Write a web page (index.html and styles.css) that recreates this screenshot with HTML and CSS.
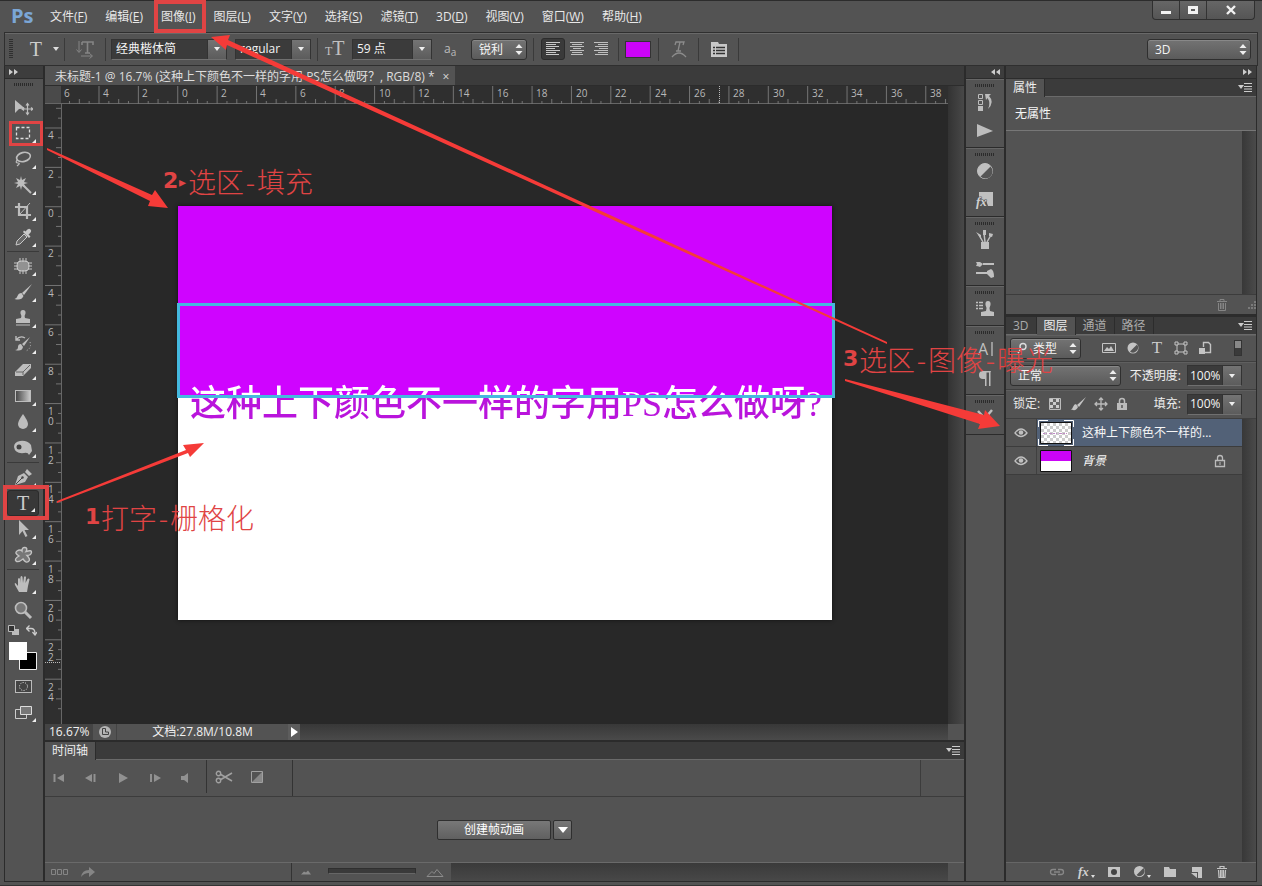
FILE: index.html
```html
<!DOCTYPE html>
<html lang="zh-CN">
<head>
<meta charset="utf-8">
<meta name="viewport" content="width=device-width, initial-scale=1">
<title>未标题-1</title>
<link rel="stylesheet" href="styles.css">
</head>
<body>
<div class="app">
  <header class="menubar">
    <span class="logo">Ps</span>
    <nav class="menus">
      <a href="#file">文件(<u>F</u>)</a><a href="#edit">编辑(<u>E</u>)</a><a href="#image">图像(<u>I</u>)</a><a href="#layer">图层(<u>L</u>)</a><a href="#type">文字(<u>Y</u>)</a><a href="#select">选择(<u>S</u>)</a><a href="#filter">滤镜(<u>T</u>)</a><a href="#3d">3D(<u>D</u>)</a><a href="#view">视图(<u>V</u>)</a><a href="#window">窗口(<u>W</u>)</a><a href="#help">帮助(<u>H</u>)</a>
    </nav>
    <div class="winbtns">
      <button aria-label="最小化"><svg width="12" height="12"><path d="M1 7h10v3H1z" fill="#f2f2f2"/></svg></button>
      <button aria-label="最大化"><svg width="12" height="12"><path d="M2.500 3.500h7v5h-7z" fill="none" stroke="#f2f2f2" stroke-width="3"/></svg></button>
      <button class="close" aria-label="关闭"><svg width="12" height="12"><path d="M2 2l8 8M10 2l-8 8" stroke="#f2f2f2" stroke-width="2.400"/></svg></button>
    </div>
  </header>

  <div class="options">
    <i class="grip-v"></i>
    <button class="opt-type" aria-label="文字工具"><span class="serif-t">T</span><svg width="6" height="4"><path d="M0 0h6L3 4z" fill="#ddd"/></svg></button>
    <i class="vsep"></i>
    <button class="opt-orient" aria-label="切换文本取向"><svg width="20" height="20"><path d="M4 2v11M1.500 10.500L4 13.500l2.500-3M6 17h11M14.500 14.500l3 2.500-3 2.500" fill="none" stroke="#858585"/><path d="M7 3h11v3M7 6V3M12.500 3v11M10 14h5" fill="none" stroke="#858585" stroke-width="1.600"/></svg></button>
    <i class="vsep"></i>
    <div class="combo font"><input aria-label="字体" value="经典楷体简"><button aria-label="字体列表"><svg width="6" height="4"><path d="M0 0h6L3 4z" fill="#eee"/></svg></button></div>
    <div class="combo style"><input aria-label="字体样式" value="regular"><button aria-label="样式列表"><svg width="6" height="4"><path d="M0 0h6L3 4z" fill="#eee"/></svg></button></div>
    <i class="vsep"></i>
    <span class="size-t"><small>T</small>T</span>
    <div class="combo size"><input aria-label="字号" value="59 点"><button aria-label="字号列表"><svg width="6" height="4"><path d="M0 0h6L3 4z" fill="#eee"/></svg></button></div>
    <span class="aa">a<sub>a</sub></span>
    <div class="select sharp"><select aria-label="消除锯齿"><option>锐利</option></select><svg width="8" height="11"><path d="M4 0l3.500 4h-7zM4 11L.5 7h7z" fill="#eee"/></svg></div>
    <i class="vsep"></i>
    <div class="aligns">
      <button class="on" aria-label="左对齐"><svg width="16" height="16"><path d="M1 1.500h14M1 3.500h10M1 5.500h13M1 7.500h9M1 9.500h14M1 11.500h10M1 13.500h13" stroke="#c8c8c8"/></svg></button>
      <button aria-label="居中"><svg width="16" height="16"><path d="M1 1.500h14M3 3.500h10M1 5.500h14M4 7.500h8M1 9.500h14M3 11.500h10M2 13.500h12" stroke="#c0c0c0"/></svg></button>
      <button aria-label="右对齐"><svg width="16" height="16"><path d="M1 1.500h14M5 3.500h10M2 5.500h13M6 7.500h9M1 9.500h14M5 11.500h10M2 13.500h13" stroke="#c0c0c0"/></svg></button>
    </div>
    <i class="vsep"></i>
    <button class="swatch" aria-label="文本颜色"></button>
    <i class="vsep"></i>
    <button class="warp" aria-label="变形文字"><svg width="16" height="18"><path d="M4 5l1-3h8l-1 3M9 2L7 11M5 11h5M1 17q7-8 14 0" fill="none" stroke="#8c8c8c" stroke-width="1.300"/></svg></button>
    <i class="vsep"></i>
    <button class="panels" aria-label="字符面板"><svg width="18" height="17"><path d="M1 1h7l1 2h8v13H1z" fill="#c8c8c8"/><path d="M3 6.500h2M6 6.500h9M3 9.500h2M6 9.500h9M3 12.500h2M6 12.500h9" stroke="#333" stroke-width="1.300"/></svg></button>
    <i class="vsep"></i>
    <div class="select workspace-select"><select aria-label="工作区"><option>3D</option></select><svg width="8" height="11"><path d="M4 0l3.500 4h-7zM4 11L.5 7h7z" fill="#eee"/></svg></div>
  </div>

  <div class="workspace">
    <aside class="toolbar">
      <div class="strip"><svg width="9" height="6"><path d="M0 0l4 3-4 3zM5 0l4 3-4 3z" fill="#ccc"/></svg></div>
      <i class="grip"></i>
      <div class="tools">
        <button aria-label="移动"><svg width="20" height="20"><path d="M2 3v13l4-4 6-.5z" fill="#bdbdbd"/><path d="M14.500 7v10M9.500 12h10M13 8.500l1.500-2 1.500 2M13 15.500l1.500 2 1.500-2M11 10.500L9 12l2 1.500M18 10.500l2 1.500-2 1.500" fill="none" stroke="#bdbdbd" stroke-width="1.200"/></svg></button>
        <button class="more" aria-label="矩形选框"><svg width="20" height="20"><path d="M3.500 4.500h13v11h-13z" fill="none" stroke="#ddd" stroke-width="1.300" stroke-dasharray="3 2"/></svg></button>
        <button class="more" aria-label="套索"><svg width="20" height="20"><ellipse cx="10.500" cy="8" rx="7" ry="4.500" transform="rotate(-14 10.500 8)" fill="none" stroke="#bdbdbd" stroke-width="1.600"/><path d="M4 11q-2 3 1 3t-1 3" fill="none" stroke="#bdbdbd" stroke-width="1.200"/></svg></button>
        <button class="more" aria-label="魔棒"><svg width="20" height="20"><path d="M8 1l1 4 4-2-2 4 4 1-4 1 2 4-4-2-1 4-1-4-4 2 2-4-4-1 4-1-2-4 4 2z" fill="#bdbdbd"/><path d="M10 10l8 8" stroke="#bdbdbd" stroke-width="2"/></svg></button>
        <button class="more" aria-label="裁剪"><svg width="20" height="20"><path d="M6 2v12h12M2 6h12v12" fill="none" stroke="#bdbdbd" stroke-width="2.200"/><path d="M7 13L17 2" stroke="#bdbdbd"/></svg></button>
        <button class="more" aria-label="吸管"><svg width="20" height="20"><path d="M3 18l1-4 7-7 3 3-7 7z" fill="#686868" stroke="#c8c8c8"/><path d="M10 5l6 6 1.500-1.500-2-2q4-3 2-5t-5 2l-1.500-1z" fill="#c8c8c8"/></svg></button>
        <i class="hsep"></i>
        <button class="more" aria-label="污点修复"><svg width="20" height="20"><rect x="4" y="5" width="12" height="10" rx="4" fill="#929292" stroke="#c8c8c8"/><path d="M7 2v4M10 2v4M13 2v4M7 14v4M10 14v4M13 14v4M1 7h4M1 10h4M1 13h4M15 7h4M15 10h4M15 13h4" stroke="#c8c8c8"/></svg></button>
        <button class="more" aria-label="画笔"><svg width="20" height="20"><path d="M19 2L9 11l2 2z" fill="#c4c4c4"/><path d="M8.500 11q-3 0-4 3t-3 3q7 2 9-3z" fill="#c4c4c4"/></svg></button>
        <button class="more" aria-label="图章"><svg width="20" height="20"><path d="M8 10q1-2-.5-4.500Q7 2 10 2t2.500 3.500Q11 8 12 10l5 1v4H3v-4zM3 16.500h14v1H3z" fill="#bdbdbd"/></svg></button>
        <button class="more" aria-label="历史画笔"><svg width="20" height="20"><path d="M17 3L9 10l2 2zM8 10q-3 0-3 3t-3 3q7 2 8-3z" fill="#bdbdbd"/><path d="M3 6q4-5 9-2M3 2v4h4" fill="none" stroke="#bdbdbd" stroke-width="1.400"/><path d="M17 8q2 6-4 9" fill="none" stroke="#bdbdbd" stroke-dasharray="1 2"/></svg></button>
        <button class="more" aria-label="橡皮擦"><svg width="20" height="20"><path d="M2 12L10 4h8v4l-8 8H2z" fill="#bdbdbd"/><path d="M3 12h7l7-7M10 12v3" fill="none" stroke="#666"/></svg></button>
        <button class="more" aria-label="渐变"><svg width="20" height="20"><defs><linearGradient id="gr"><stop stop-color="#444"/><stop offset="1" stop-color="#ccc"/></linearGradient></defs><rect x="2.500" y="4.500" width="15" height="11" fill="url(#gr)" stroke="#bdbdbd"/></svg></button>
        <button class="more" aria-label="模糊"><svg width="20" height="20"><path d="M10 2q5 7 5 10a5 5 0 01-10 0q0-3 5-10z" fill="#bdbdbd"/></svg></button>
        <button class="more" aria-label="海绵"><svg width="20" height="20"><path d="M1 9q0-5 6-6 7-1 11 4l1 6-3 4q-1-3-5-2-9 1-10-6z" fill="#bdbdbd"/><circle cx="6" cy="9" r="2.500" fill="#444"/></svg></button>
        <i class="hsep"></i>
        <button class="more" aria-label="钢笔"><svg width="20" height="20"><path d="M2 18l3-9 6-3 4 4-3 5zM12 5l2-3 5 5-3 2z" fill="#bdbdbd"/><path d="M3 17l6-6" stroke="#444"/><circle cx="9.500" cy="10.500" r="1.200" fill="#444"/></svg></button>
        <button class="more on" aria-label="横排文字"><span class="serif-t">T</span></button>
        <button class="more" aria-label="路径选择"><svg width="20" height="20"><path d="M6 1v15l3.500-4 3 6 2-1-3-6h4.500z" fill="#bdbdbd"/></svg></button>
        <button class="more" aria-label="自定形状"><svg width="20" height="20"><path d="M9 6q0-4 3-3.500t1 4q6-2 5.500 1t-4.500 3q4 4 1.500 6T10 14q-5 4-7 2t3-5q-5-3-2-5t5 0z" fill="#777" stroke="#c4c4c4" stroke-width="1.400"/></svg></button>
        <i class="hsep"></i>
        <button class="more" aria-label="抓手"><svg width="20" height="20"><path d="M6 18L2 11q-1-2 .5-2L5 12V5q1-2 2 0v4l.5-6q1-2 2 0l.5 6 1-6q1-1.500 2 0l-.5 6 2-4q1.500-1 2 .5L15 12l-1 6z" fill="#bdbdbd"/></svg></button>
        <button aria-label="缩放"><svg width="20" height="20"><path d="M11 11l7 7" stroke="#bdbdbd" stroke-width="3"/><circle cx="8" cy="8" r="5.500" fill="#777" stroke="#bdbdbd" stroke-width="1.600"/></svg></button>
      </div>
      <div class="mini">
        <svg width="11" height="10"><path d="M4 4h7v6H4z" fill="#bbb"/><path d="M.5.5h6v6h-6z" fill="#333" stroke="#bbb"/></svg>
        <svg width="11" height="11"><path d="M1 3.500h4q4 0 4 5M3.500.5l-3 3 3 3M6.500 7l2.500 3 2-3" fill="none" stroke="#ccc" stroke-width="1.300"/></svg>
      </div>
      <svg class="colors" width="30" height="30"><path d="M11.500 11.500h17v17h-17z" fill="#000" stroke="#eee"/><path d="M1 1h18v18H1z" fill="#fff"/></svg>
      <div class="tools">
        <button aria-label="快速蒙版"><svg width="20" height="20"><rect x="2.500" y="4.500" width="16" height="12" fill="#444" stroke="#bbb"/><circle cx="10.500" cy="10.500" r="4" fill="none" stroke="#eee" stroke-dasharray="1 1.500"/></svg></button>
        <button class="more" aria-label="屏幕模式"><svg width="20" height="20"><path d="M2.500 7.500h11v9h-11z" fill="none" stroke="#ccc"/><path d="M7.500 4.500h11v8h-11z" fill="#777" stroke="#ddd"/></svg></button>
      </div>
    </aside>

    <main class="center">
      <div class="doctabs"><div class="doctab"><span>未标题-1 @ 16.7% (这种上下颜色不一样的字用 PS怎么做呀？, RGB/8) *</span><button aria-label="关闭文档">×</button></div></div>
      <div class="docrow">
        <div class="docmain">
          <div class="ruler-top">
            <i class="corner"></i>
            <svg class="ruler-h" width="100%" height="18">
              <defs><pattern id="ph" x="37.500" width="39.370" height="18" patternUnits="userSpaceOnUse"><path d="M.5 0v18M10.340 15v3M20.200 13v5M30 15v3" stroke="#747474"/></pattern></defs>
              <rect width="100%" height="18" fill="url(#ph)"/>
              <path d="M658.500 0v18" stroke="#bbb" stroke-dasharray="1 1"/>
              <text x="3" y="11">6</text><text x="42" y="11">4</text><text x="81" y="11">2</text><text x="121" y="11">0</text><text x="160" y="11">2</text><text x="199" y="11">4</text><text x="239" y="11">6</text><text x="278" y="11">8</text><text x="318" y="11">10</text><text x="357" y="11">12</text><text x="397" y="11">14</text><text x="436" y="11">16</text><text x="475" y="11">18</text><text x="515" y="11">20</text><text x="554" y="11">22</text><text x="594" y="11">24</text><text x="633" y="11">26</text><text x="672" y="11">28</text><text x="712" y="11">30</text><text x="751" y="11">32</text><text x="790" y="11">34</text><text x="830" y="11">36</text><text x="869" y="11">38</text>
            </svg>
          </div>
          <div class="docbody">
            <div class="ruler-left">
              <svg class="ruler-v" width="16" height="610">
                <defs><pattern id="pv" y="23.500" width="16" height="39.370" patternUnits="userSpaceOnUse"><path d="M0 .5h16M13 10.340h3M11 20.200h5M13 30h3" stroke="#747474"/></pattern></defs>
                <rect width="16" height="610" fill="url(#pv)"/>
                <path d="M0 558.500h16" stroke="#bbb" stroke-dasharray="1 1"/>
                <text x="3" y="35">4</text><text x="3" y="74">2</text><text x="3" y="113">0</text><text x="3" y="153">2</text><text x="3" y="193">4</text><text x="3" y="232">6</text><text x="3" y="271">8</text>
                <text><tspan x="3" y="311">1</tspan><tspan x="3" y="321">0</tspan></text><text><tspan x="3" y="350">1</tspan><tspan x="3" y="360">2</tspan></text><text><tspan x="3" y="389">1</tspan><tspan x="3" y="399">4</tspan></text><text><tspan x="3" y="429">1</tspan><tspan x="3" y="439">6</tspan></text><text><tspan x="3" y="469">1</tspan><tspan x="3" y="479">8</tspan></text><text><tspan x="3" y="508">2</tspan><tspan x="3" y="518">0</tspan></text><text><tspan x="3" y="547">2</tspan><tspan x="3" y="557">2</tspan></text><text><tspan x="3" y="587">2</tspan><tspan x="3" y="597">4</tspan></text>
              </svg>
            </div>
            <div class="stage">
              <div class="artboard">
                <p class="art-text">这种上下颜色不一样的字用PS怎么做呀?</p>
                <div class="selection"></div>
              </div>
            </div>
          </div>
        </div>
        <div class="vscroll"></div>
      </div>
      <div class="status">
        <span class="zoom">16.67%</span>
        <span class="st-icon"><svg width="14" height="14"><circle cx="7" cy="7" r="6" fill="#b5b5b5"/><path d="M4.500 3.500v6h6V7h-3V3.500z" fill="none" stroke="#444"/></svg></span>
        <span class="docinfo">文档:27.8M/10.8M</span>
        <button aria-label="状态栏选项"><svg width="7" height="10"><path d="M0 0l7 5-7 5z" fill="#fff"/></svg></button>
        <i class="hscroll"></i><i class="sizer"></i>
      </div>
      <section class="timeline">
        <div class="tabs"><button class="tab on">时间轴</button><button class="panel-menu" aria-label="时间轴菜单"><svg width="14" height="9"><path d="M0 2h6L3 6z" fill="#ccc"/><path d="M6 .5h8M6 3.500h8M6 6h8M6 8.500h8" stroke="#ccc"/></svg></button></div>
        <div class="tl-controls">
          <div class="play">
            <button aria-label="首帧"><svg width="14" height="12"><path d="M2.500 2v8" stroke="#919191" stroke-width="2"/><path d="M12 2v8L5 6z" fill="#919191"/></svg></button>
            <button aria-label="上一帧"><svg width="14" height="12"><path d="M8 2v8L1 6z" fill="#919191"/><path d="M10.500 2v8" stroke="#919191" stroke-width="2"/></svg></button>
            <button aria-label="播放"><svg width="14" height="12"><path d="M3 1l9 5-9 5z" fill="#919191"/></svg></button>
            <button aria-label="下一帧"><svg width="14" height="12"><path d="M3 2v8" stroke="#919191" stroke-width="2"/><path d="M6 2v8l7-4z" fill="#919191"/></svg></button>
            <button aria-label="声音"><svg width="14" height="12"><path d="M1 4h3l4-3v10L4 8H1z" fill="#919191"/></svg></button>
          </div>
          <div class="cut">
            <button aria-label="拆分"><svg width="18" height="14"><path d="M5 4l12 7M5 10l12-7" stroke="#a0a0a0" stroke-width="1.600"/><circle cx="3.500" cy="3.500" r="2.200" fill="none" stroke="#a0a0a0" stroke-width="1.400"/><circle cx="3.500" cy="10.500" r="2.200" fill="none" stroke="#a0a0a0" stroke-width="1.400"/></svg></button>
            <button aria-label="过渡"><svg width="14" height="14"><path d="M1.500 1.500h11v11h-11z" fill="none" stroke="#a0a0a0"/><path d="M12 2v10H2z" fill="#888"/></svg></button>
          </div>
          <i class="tl-end"></i>
        </div>
        <div class="tl-body"><button class="btn">创建帧动画</button><button class="btn drop" aria-label="更多"><svg width="10" height="6"><path d="M0 0h10L5 6z" fill="#fff"/></svg></button></div>
        <div class="tl-foot">
          <div class="tl-foot-left"><svg width="18" height="8"><path d="M.5 1.500h4v5h-4zM6.500 1.500h4v5h-4zM12.500 1.500h4v5h-4z" fill="none" stroke="#858585"/></svg><svg width="14" height="12"><path d="M0 11q1-7 8-7V1l6 5-6 5V7Q3 7 0 11z" fill="#858585"/></svg></div>
          <div class="tl-zoom"><svg width="10" height="5"><path d="M0 4.500l3-3 2 1 2-2 3 4z" fill="#8c8c8c"/></svg><input type="range" aria-label="时间轴缩放"><svg width="18" height="9"><path d="M1 8.500l5-5 2 2 3-4 6 7z" fill="none" stroke="#8c8c8c"/></svg></div>
          <i class="tl-scroll"></i><i class="tl-corner"></i>
        </div>
      </section>
    </main>

    <aside class="dock">
      <div class="strip right"><svg width="9" height="6"><path d="M4 0L0 3l4 3zM9 0L5 3l4 3z" fill="#ccc"/></svg></div>
      <div class="dockgroup"><i class="grip"></i>
        <button aria-label="历史记录"><svg width="20" height="20"><path d="M3.500 2.500h4v4h-4zM3.500 8.500h4v4h-4z" fill="none" stroke="#bdbdbd"/><path d="M3 14h5v5H3z" fill="#bdbdbd"/><path d="M10 2h6l-2 2q6 6-1 13 3-6-.5-11L11 8z" fill="#bdbdbd"/></svg></button>
        <button aria-label="动作"><svg width="20" height="20"><path d="M2 3l16 7-16 6z" fill="#bdbdbd"/></svg></button></div>
      <div class="dockgroup"><i class="grip"></i>
        <button aria-label="调整"><svg width="20" height="20"><circle cx="10" cy="10" r="7.500" fill="#c0c0c0" stroke="#c0c0c0"/><path d="M15.500 5.500a7 7 0 01-10 10z" fill="#555"/></svg></button>
        <button aria-label="样式"><svg width="20" height="20"><path d="M4 2h14v14h-5l-2-6H4z" fill="#c0c0c0"/><text x="1" y="16" class="fx">fx</text></svg></button></div>
      <div class="dockgroup"><i class="grip"></i>
        <button aria-label="画笔预设"><svg width="20" height="20"><path d="M6 12h8v7H6z" fill="#c0c0c0"/><path d="M8 12L4 5M10 12l-1-9M12 12l4-7" stroke="#c0c0c0" stroke-width="1.500"/><path d="M1 2l5 3v4zM8 0h3v5H8zM14 3l4 1-1 3-3-1z" fill="#c0c0c0"/></svg></button>
        <button aria-label="画笔"><svg width="20" height="20"><path d="M8 5h11M1 14h11" stroke="#c0c0c0" stroke-width="2"/><path d="M1 3h4l3 2-3 3q-2-1-4-1l1-2zM12 12l4-2q3 1 3 8l-3 1-4-4z" fill="#c0c0c0"/></svg></button></div>
      <div class="dockgroup"><i class="grip"></i>
        <button aria-label="仿制源"><svg width="20" height="20"><path d="M1 3.500h2M4 3.500h4M1 6.500h2M4 6.500h4M1 9.500h2M4 9.500h4" stroke="#c0c0c0" stroke-width="1.500"/><path d="M11 12q1-4-.5-6Q10 2 13 2t2.500 4q-1.500 2-.5 6l4 1v4H6v-4z" fill="#c0c0c0"/></svg></button></div>
      <div class="dockgroup"><i class="grip"></i>
        <button aria-label="字符"><svg width="20" height="24"><text x="3" y="18" class="char">A</text><path d="M17 5v14" stroke="#c0c0c0" stroke-width="1.300"/></svg></button>
        <button aria-label="段落"><svg width="20" height="20"><path d="M16 3H8a4 4 0 000 8h2v7h1.500V4.500H14V18h1.500V4.500z" fill="#bdbdbd"/></svg></button></div>
      <div class="dockgroup"><i class="grip"></i>
        <button aria-label="工具预设"><svg width="20" height="20"><path d="M3 3l12 13M17 2L5 16" stroke="#bdbdbd" stroke-width="2.500"/></svg></button></div>
    </aside>

    <aside class="side">
      <div class="strip right"><svg width="9" height="6"><path d="M0 0l4 3-4 3zM5 0l4 3-4 3z" fill="#ccc"/></svg></div>
      <section class="props">
        <div class="tabs"><button class="tab on">属性</button><button class="panel-menu" aria-label="属性菜单"><svg width="14" height="9"><path d="M0 2h6L3 6z" fill="#ccc"/><path d="M6 .5h8M6 3.500h8M6 6h8M6 8.500h8" stroke="#ccc"/></svg></button></div>
        <h2>无属性</h2>
        <div class="props-body"><i class="track"></i></div>
        <div class="props-foot"><svg width="12" height="13"><path d="M1 3.500h10M4 3V1.500h4V3M2.500 5v7.500h7V5M4.500 5v6M6 5v6M7.500 5v6" fill="none" stroke="#858585"/></svg><svg width="8" height="8"><path d="M7 0v2M4 3v2M7 3v2M1 6v2M4 6v2M7 6v2" stroke="#888" stroke-width="1.500"/></svg></div>
      </section>
      <section class="layers">
        <div class="tabs"><button class="tab">3D</button><button class="tab on">图层</button><button class="tab">通道</button><button class="tab">路径</button><button class="panel-menu" aria-label="图层菜单"><svg width="14" height="9"><path d="M0 2h6L3 6z" fill="#ccc"/><path d="M6 .5h8M6 3.500h8M6 6h8M6 8.500h8" stroke="#ccc"/></svg></button></div>
        <div class="lrow filter">
          <div class="select kind"><select aria-label="滤镜类型"><option>类型</option></select><svg class="mag" width="10" height="12"><circle cx="6" cy="4.500" r="3" fill="none" stroke="#ddd" stroke-width="1.400"/><path d="M4 7L1 11" stroke="#ddd" stroke-width="1.400"/></svg><svg width="8" height="11"><path d="M4 0l3.500 4h-7zM4 11L.5 7h7z" fill="#eee"/></svg></div>
          <div class="filters">
            <button aria-label="像素"><svg width="14" height="14"><path d="M.5 2.500h13v9H.5z" fill="none" stroke="#c4c4c4"/><path d="M2 10l3-4 2 2 2-3 3 5z" fill="#c4c4c4"/></svg></button>
            <button aria-label="调整"><svg width="14" height="14"><circle cx="7" cy="7" r="5.500" fill="#c4c4c4"/><path d="M11 3.500a5 5 0 01-7 7z" fill="#555"/></svg></button>
            <button aria-label="文字"><b class="serif-t">T</b></button>
            <button aria-label="形状"><svg width="14" height="14"><path d="M3 3h8v8H3z" fill="none" stroke="#c4c4c4"/><path d="M1 1h3v3H1zM10 1h3v3h-3zM1 10h3v3H1zM10 10h3v3h-3z" fill="#555" stroke="#c4c4c4"/></svg></button>
            <button aria-label="智能对象"><svg width="14" height="14"><path d="M5.500 6V1.500h5l2 2v8H7" fill="none" stroke="#c4c4c4" stroke-width="1.400"/><path d="M1 7h6v6H1z" fill="#c4c4c4"/></svg></button>
          </div>
          <i class="toggle"></i>
        </div>
        <div class="lrow">
          <div class="select blend"><select aria-label="混合模式"><option>正常</option></select><svg width="8" height="11"><path d="M4 0l3.500 4h-7zM4 11L.5 7h7z" fill="#eee"/></svg></div>
          <label for="opacity">不透明度:</label>
          <div class="combo pct"><input id="opacity" value="100%"><button aria-label="不透明度滑块"><svg width="6" height="4"><path d="M0 0h6L3 4z" fill="#eee"/></svg></button></div>
        </div>
        <div class="lrow lock">
          <span>锁定:</span>
          <div class="locks">
            <button aria-label="锁定透明像素"><svg width="14" height="14"><path d="M1.500 1.500h11v11h-11z" fill="#666" stroke="#bbb"/><path d="M2 2h3v3H2zM8 2h3v3H8zM5 5h3v3H5zM2 8h3v3H2zM8 8h3v3H8z" fill="#ccc"/></svg></button>
            <button aria-label="锁定图像像素"><svg width="16" height="14"><path d="M16 0L7 8l2 2zM6 7q-2 0-3 3t-3 2q6 3 8-2z" fill="#c4c4c4"/></svg></button>
            <button aria-label="锁定位置"><svg width="14" height="14"><path d="M7 1v12M1 7h12M5 3l2-2 2 2M5 11l2 2 2-2M3 5L1 7l2 2M11 5l2 2-2 2" fill="none" stroke="#bbb" stroke-width="1.300"/></svg></button>
            <button aria-label="锁定全部"><svg width="12" height="14"><path d="M3.500 7V4a2.500 2.500 0 015 0v3" fill="none" stroke="#bbb" stroke-width="1.500"/><path d="M1 6h10v7H1z" fill="#bbb"/><path d="M6 8v3" stroke="#555" stroke-width="1.500"/></svg></button>
          </div>
          <label for="fill">填充:</label>
          <div class="combo pct"><input id="fill" value="100%"><button aria-label="填充滑块"><svg width="6" height="4"><path d="M0 0h6L3 4z" fill="#eee"/></svg></button></div>
        </div>
        <div class="layer-area">
          <ul class="layer-list">
            <li class="selected">
              <button class="eye" aria-label="隐藏图层"><svg width="14" height="10"><path d="M1 5q6-8 12 0-6 7-12 0z" fill="none" stroke="#c0c0c0" stroke-width="1.300"/><circle cx="7" cy="4.500" r="2.300" fill="#c0c0c0"/></svg></button>
              <svg class="thumb" width="36" height="26"><defs><pattern id="ck" width="6" height="6" patternUnits="userSpaceOnUse"><path d="M0 0h6v6H0z" fill="#fff"/><path d="M0 0h3v3H0zM3 3h3v3H3z" fill="#ccc"/></pattern></defs><path d="M2.500 2.500h31v21h-31z" fill="url(#ck)" stroke="#111"/><path d="M5 13.500h26" stroke="#c08ac6" stroke-dasharray="2 1 1 2 3 1"/><path d="M.5 7V.5H10M26 .5h9.500V7M35.500 19v6.500H26M10 25.500H.5V19" fill="none" stroke="#fff"/></svg>
              <span>这种上下颜色不一样的...</span>
            </li>
            <li>
              <button class="eye" aria-label="隐藏图层"><svg width="14" height="10"><path d="M1 5q6-8 12 0-6 7-12 0z" fill="none" stroke="#c0c0c0" stroke-width="1.300"/><circle cx="7" cy="4.500" r="2.300" fill="#c0c0c0"/></svg></button>
              <svg class="thumb" width="36" height="26"><path d="M2.500 2.500h31v21h-31z" fill="#fff" stroke="#111"/><path d="M3 3h30v10H3z" fill="#cb04f7"/></svg>
              <em>背景</em>
              <svg class="padlock" width="12" height="14"><path d="M3.500 6V4a2.500 2.500 0 015 0v2" fill="none" stroke="#bbb" stroke-width="1.300"/><path d="M1.500 6.500h9v6h-9z" fill="none" stroke="#bbb" stroke-width="1.300"/><path d="M6 8v3" stroke="#bbb"/></svg>
            </li>
          </ul>
          <i class="track"></i>
        </div>
        <div class="layer-foot">
          <button aria-label="链接图层"><svg width="16" height="14"><path d="M7 4.500H4a2.500 2.500 0 000 5h3M9 4.500h3a2.500 2.500 0 010 5H9M5 7h6" fill="none" stroke="#888" stroke-width="1.300"/></svg></button>
          <button aria-label="图层样式"><svg width="18" height="18"><text x="1" y="13" class="fx">fx</text><path d="M14 12h4l-2 3z" fill="#ddd"/></svg></button>
          <button aria-label="添加蒙版"><svg width="14" height="14"><path d="M1 2h12v10H1z" fill="#c4c4c4"/><circle cx="7" cy="7" r="3" fill="#444"/></svg></button>
          <button aria-label="调整图层"><svg width="18" height="14"><circle cx="6.500" cy="6.500" r="5.500" fill="#c4c4c4"/><path d="M10.500 3a5 5 0 01-7 7z" fill="#555"/><path d="M14 10h4l-2 3z" fill="#ddd"/></svg></button>
          <button aria-label="新建组"><svg width="14" height="14"><path d="M1 2h5l1 2h6v8H1z" fill="#c4c4c4"/></svg></button>
          <button aria-label="新建图层"><svg width="14" height="14"><path d="M3 2h10v11H9V7H3z" fill="#c4c4c4"/><path d="M2 8h6v5z" fill="#c4c4c4"/></svg></button>
          <button aria-label="删除图层"><svg width="14" height="14"><path d="M2 3.500h10M5 3V1.500h4V3M3.500 5l.5 7.500h6l.5-7.500M5.500 5v7M7 5v7M8.500 5v7" fill="none" stroke="#c4c4c4" stroke-width="1.200"/></svg></button>
        </div>
      </section>
    </aside>
  </div>
</div>

<div class="notes">
  <svg width="1262" height="886" viewBox="0 0 1262 886">
    <g fill="none" stroke="#e04444" stroke-width="4"><path d="M156 2h48v29h-48zM5 487h42v31H5z"/><path d="M10.500 122.500h31v22h-31z" stroke-width="3"/></g>
    <g fill="#f53b38">
      <path d="M47 148l105 47 3-5 13 18-20-2 2-5L47 150z"/>
      <path d="M57 501l129-51-3-5 21-2-14 14-2-4-131 50z"/>
      <path d="M887 342L228 40l2-5-19 2 15 13 1-5 660 299z"/>
      <path d="M845 379l139 36 1-5 15 16-22 3 2-5-135-43z"/>
    </g>
  </svg>
  <p class="note n1"><b>1</b><span>打字</span><i>-</i><span>栅格化</span></p>
  <p class="note n2"><b>2</b><small>▸</small><span>选区</span><i>-</i><span>填充</span></p>
  <p class="note n3"><b>3</b><span>选区</span><i>-</i><span>图像</span><i>-</i><span>曝光</span></p>
</div>
</body>
</html>
```
FILE: styles.css
```css
* { box-sizing: border-box; }
body {
  margin: 0;
  background: #535353;
  color: #e8e8e8;
  font: 12px/16px "Open Sans", "Noto Sans CJK SC", sans-serif;
  position: relative;
}
button, input, select { font: inherit; color: inherit; }
button { padding: 0; border: 0; background: none; display: grid; place-items: center; }
svg { display: block; flex: none; }
i { font-style: normal; }
a { color: inherit; text-decoration: none; }

.app {
  min-height: 100vh;
  display: flex;
  flex-direction: column;
  border-top: 1px solid #2c2c2c;
  border-bottom: 1px solid #333;
  padding-bottom: 3px;
}

/* menu bar */
.menubar { display: flex; align-items: center; height: 31px; padding: 0 7px 0 11px; }
.logo { width: 39px; padding-bottom: 2px; font: bold 20px/24px "Open Sans", sans-serif; color: #7ba6d6; }
.menus { display: flex; gap: 18px; flex: 1; white-space: nowrap; }
.winbtns { display: flex; align-self: flex-start; border: 1px solid #2f2f2f; border-top: 0; border-radius: 0 0 4px 4px; background: linear-gradient(#666, #555); }
.winbtns button { width: 27px; height: 18px; border-right: 1px solid #333; }
.winbtns .close { width: 47px; border-right: 0; }

/* options bar */
.options {
  display: flex;
  align-items: center;
  height: 34px;
  margin: 0 4px;
  padding: 0 6px 0 4px;
  border: 1px solid #2f2f2f;
  box-shadow: inset 0 1px #696969;
}
.grip-v { width: 4px; height: 20px; background: repeating-linear-gradient(#2f2f2f 0 1px, #535353 1px 2px); }
.vsep { width: 1px; height: 23px; background: #3a3a3a; }
.serif-t { font: 20px/22px "Liberation Serif", serif; color: #ccc; }
.opt-type { width: 51px; grid-auto-flow: column; gap: 6px; padding: 0 2px 0 14px; }
.opt-orient { width: 40px; }
.combo { display: flex; height: 21px; border: 1px solid #333; border-bottom-color: #707070; background: #3b3b3b; }
.combo input { min-width: 0; flex: 1; border: 0; padding: 0 4px; background: none; color: #f4f4f4; outline: 0; }
.combo button { width: 19px; border-left: 1px solid #333; background: linear-gradient(#747474, #5c5c5c); }
.font { width: 116px; margin-left: 5px; }
.style { width: 76px; margin: 0 6px 0 8px; }
.size-t { width: 34px; padding-left: 7px; font: 20px/22px "Liberation Serif", serif; color: #c0c0c0; white-space: nowrap; }
.size-t small { font-size: 12px; }
.size { width: 80px; }
.aa { width: 39px; padding-left: 12px; color: #bbb; line-height: 12px; }
.aa sub { line-height: 0; }
.select { display: grid; align-items: center; height: 21px; border: 1px solid #2f2f2f; border-radius: 3px; background: linear-gradient(#737373, #5b5b5b); box-shadow: inset 0 1px #888; }
.select > * { grid-area: 1 / 1; }
.select select { appearance: none; width: 100%; height: 19px; border: 0; padding: 0 7px; background: none; line-height: 19px; outline: 0; color: #f4f4f4; }
.select svg { justify-self: end; margin-right: 3px; pointer-events: none; }
.sharp { width: 56px; margin-right: 6px; }
.aligns { display: flex; width: 84px; padding-left: 7px; }
.aligns button { width: 24px; height: 22px; border-radius: 3px; }
.aligns .on { background: #3a3a3a; border: 1px solid #2c2c2c; }
.swatch { width: 26px; height: 17px; margin: 0 7px 0 6px; border: 1px solid #333; background: #cc04f8; }
.warp, .panels { width: 39px; }
.workspace-select { width: 104px; margin-left: auto; }

/* workspace columns */
.workspace { flex: 1; display: flex; gap: 2px; margin: 0 5px 0 4px; border: 1px solid #2b2b2b; border-top: 0; background: #2b2b2b; }
.strip { height: 13px; display: flex; align-items: center; padding: 0 6px 0 4px; background: #3d3d3d; border-bottom: 1px solid #2c2c2c; }
.strip.right { justify-content: flex-end; padding: 0 4px; }
.grip { display: block; width: 20px; height: 3px; margin: 4px auto 0; background: repeating-linear-gradient(90deg, #2b2b2b 0 1px, #535353 1px 2px); }

.toolbar { width: 38px; background: #535353; }
.tools { display: flex; flex-direction: column; padding: 8px 4px 0 2px; }
.tools button { height: 26px; position: relative; }
.tools .on { background: #383838; border: 1px solid #2b2b2b; border-radius: 3px; }
.more::after { content: ""; position: absolute; right: 3px; bottom: 3px; border: 2px solid; border-color: transparent #eee #eee transparent; }
.hsep { height: 1px; margin: 1px 0; background: #3a3a3a; }
.mini { display: flex; justify-content: space-between; padding: 2px 6px 5px 3px; }
.colors { margin: 0 0 0 3px; }
.colors + .tools { padding-top: 2px; }

.center { flex: 1; min-width: 0; display: flex; flex-direction: column; background: #535353; }
.doctabs { height: 20px; display: flex; background: #3b3b3b; border-bottom: 1px solid #2c2c2c; }
.doctab { display: flex; align-items: center; gap: 8px; padding: 3px 6px 0 10px; background: #535353; color: #ddd; white-space: nowrap; }
.docrow { flex: 1; display: flex; }
.docmain { flex: 1; min-width: 0; display: flex; flex-direction: column; background: #282828; }
.ruler-top { display: flex; height: 18px; background: #2f2f2f; border-bottom: 1px solid #666; }
.corner { width: 16px; background: #4a4a4a; flex: none; }
.ruler-h { flex: 1; min-width: 0; }
.ruler-h text, .ruler-v text { font: 10px "Open Sans", sans-serif; fill: #b8b8b8; }
.docbody { flex: 1; display: flex; }
.ruler-left { width: 17px; flex: none; background: #2f2f2f; border-right: 1px solid #666; }
.stage { flex: 1; min-width: 0; padding: 102px 0 0 116px; overflow: hidden; }
.artboard { position: relative; width: 654px; height: 414px; background: linear-gradient(#cf04ff 0 190px, #fff 190px); box-shadow: 0 0 4px #111; }
.art-text {
  margin: 0;
  padding: 172px 0 0 12px;
  font: 500 36px/52px "Liberation Serif", "Noto Sans CJK SC", serif;
  white-space: nowrap;
  color: transparent;
  background: linear-gradient(#fff 0 190px, #b914dc 190px);
  background-clip: text;
  -webkit-background-clip: text;
}
.selection { position: absolute; left: -1px; right: -3px; top: 97px; height: 95px; border: 3px solid #45b9df; }
.vscroll { width: 16px; background: linear-gradient(90deg, #333, #484848); }
.status { display: flex; height: 18px; border-bottom: 2px solid #2b2b2b; background: #484848; color: #f0f0f0; }
.status span { line-height: 15px; }
.zoom { width: 48px; padding-left: 4px; background: #444; }
.st-icon { width: 24px; display: grid; place-items: center; background: #535353; border-right: 1px solid #444; }
.docinfo { width: 171px; text-align: center; background: #535353; }
.status button { width: 12px; background: #5d5d5d; }
.hscroll { flex: 1; background: linear-gradient(#383838, #4a4a4a); }
.sizer { width: 16px; background: #535353; }

.tabs { display: flex; height: 18px; background: #3b3b3b; border-bottom: 1px solid #6a6a6a; }
.tab { padding: 0 7px; color: #aaa; border-right: 1px solid #2c2c2c; }
.tab.on { background: #535353; color: #eee; margin-bottom: -1px; }
.panel-menu { margin-left: auto; margin-right: 4px; }
.tl-controls { display: flex; height: 37px; border-bottom: 1px solid #3c3c3c; }
.play { display: flex; width: 162px; align-items: center; margin-bottom: 3px; padding: 2px 0 0 7px; gap: 18px; border-right: 1px solid #333; }
.cut { display: flex; width: 86px; align-items: center; padding: 0 0 2px 8px; gap: 17px; border-right: 1px solid #333; }
.tl-end { margin-left: auto; width: 44px; border-left: 1px solid #3c3c3c; }
.tl-body { display: flex; justify-content: center; gap: 2px; padding: 23px 0 22px; }
.btn { width: 114px; height: 20px; border: 1px solid #2f2f2f; border-radius: 2px; background: linear-gradient(#787878, #606060); color: #fff; }
.drop { width: 19px; }
.tl-foot { display: flex; height: 19px; border-top: 1px solid #6a6a6a; }
.tl-foot-left { display: flex; width: 247px; align-items: center; gap: 12px; padding-left: 6px; border-right: 1px solid #333; }
.tl-zoom { display: flex; width: 159px; align-items: center; justify-content: space-between; padding: 0 7px 0 9px; }
.tl-zoom input { appearance: none; width: 88px; height: 6px; margin: 0 0 2px 6px; background: #3a3a3a; border: 1px solid #2f2f2f; border-bottom-color: #666; }
.tl-zoom input::-webkit-slider-thumb { appearance: none; width: 0; }
.tl-scroll { flex: 1; background: linear-gradient(#3a3a3a, #484848); }
.tl-corner { width: 16px; }

.dock { width: 38px; background: #535353; }
.dockgroup { border-bottom: 1px solid #2b2b2b; box-shadow: inset 0 1px #666; padding: 1px 0 2px; }
.dockgroup button { width: 100%; height: 29px; }
.fx { font: italic bold 13px "Liberation Serif", serif; fill: #d0d0d0; stroke: #535353; stroke-width: 1px; paint-order: stroke; }
.char { font: 16px "Open Sans", sans-serif; fill: #c0c0c0; }

.side { width: 250px; display: flex; flex-direction: column; background: #535353; }
.props h2 { margin: 0; height: 33px; padding: 9px 9px; font-size: 12px; line-height: 16px; font-weight: normal; color: #f6f6f6; }
.props-body { display: flex; justify-content: flex-end; height: 165px; border-top: 1px solid #777; border-bottom: 1px solid #3c3c3c; }
.track { width: 14px; background: linear-gradient(90deg, #383838, #4a4a4a); }
.props-foot { display: flex; align-items: center; justify-content: flex-end; gap: 20px; height: 22px; border-bottom: 3px solid #2c2c2c; }
.layers { flex: 1; display: flex; flex-direction: column; }
.lrow { display: flex; align-items: center; height: 28px; padding: 0 14px 0 4px; border-bottom: 1px solid #3f3f3f; box-shadow: inset 0 1px #5f5f5f; white-space: nowrap; }
.lrow label { margin-left: auto; padding-right: 6px; color: #eee; }
.filter { height: 27px; }
.kind { width: 71px; }
.kind select { padding-left: 22px; }
.select .mag { justify-self: start; margin-left: 6px; }
.filters { display: flex; gap: 10px; padding-left: 21px; }
.filters .serif-t { font-size: 17px; width: 14px; text-align: center; }
.toggle { width: 8px; height: 16px; margin-left: auto; border: 1px solid #333; background: linear-gradient(#888 50%, #3a3a3a 50%); }
.blend { width: 111px; }
.pct { width: 55px; }
.pct input { padding: 0 2px; }
.lock { height: 29px; padding-left: 7px; }
.locks { display: flex; gap: 8px; padding-left: 8px; }
.layer-area { flex: 1; display: flex; background: #484848; }
.layer-list { flex: 1; margin: 0; padding: 0; list-style: none; }
.layer-list li { display: flex; align-items: center; height: 28px; background: #535353; border-bottom: 1px solid #3c3c3c; color: #f6f6f6; }
.layer-list .selected { background: linear-gradient(90deg, #535353 31px, #526177 31px); }
.eye { width: 31px; align-self: stretch; border-right: 1px solid #404040; }
.thumb { margin: 0 8px 0 1px; }
.padlock { margin: 0 16px 0 auto; }
.layer-foot { display: flex; align-items: center; justify-content: flex-end; gap: 12px; height: 19px; padding-right: 27px; border-top: 1px solid #666; }

/* hand-drawn tutorial notes floating over the window */
.notes { position: absolute; left: 0; top: 0; width: 100%; height: 100%; overflow: hidden; pointer-events: none; }
.note { position: absolute; margin: 0; display: flex; align-items: center; font: 28px/32px "Noto Sans CJK SC", sans-serif; font-weight: 300; color: #e04444; white-space: nowrap; }
.note b { width: 16px; font: bold 22px/32px "DejaVu Sans", sans-serif; }
.note i { width: 13px; text-align: center; }
.note small { width: 9px; font-size: 14px; }
.n1 { left: 85px; top: 501px; }
.n2 { left: 163px; top: 165px; }
.n3 { left: 843px; top: 343px; }
```
